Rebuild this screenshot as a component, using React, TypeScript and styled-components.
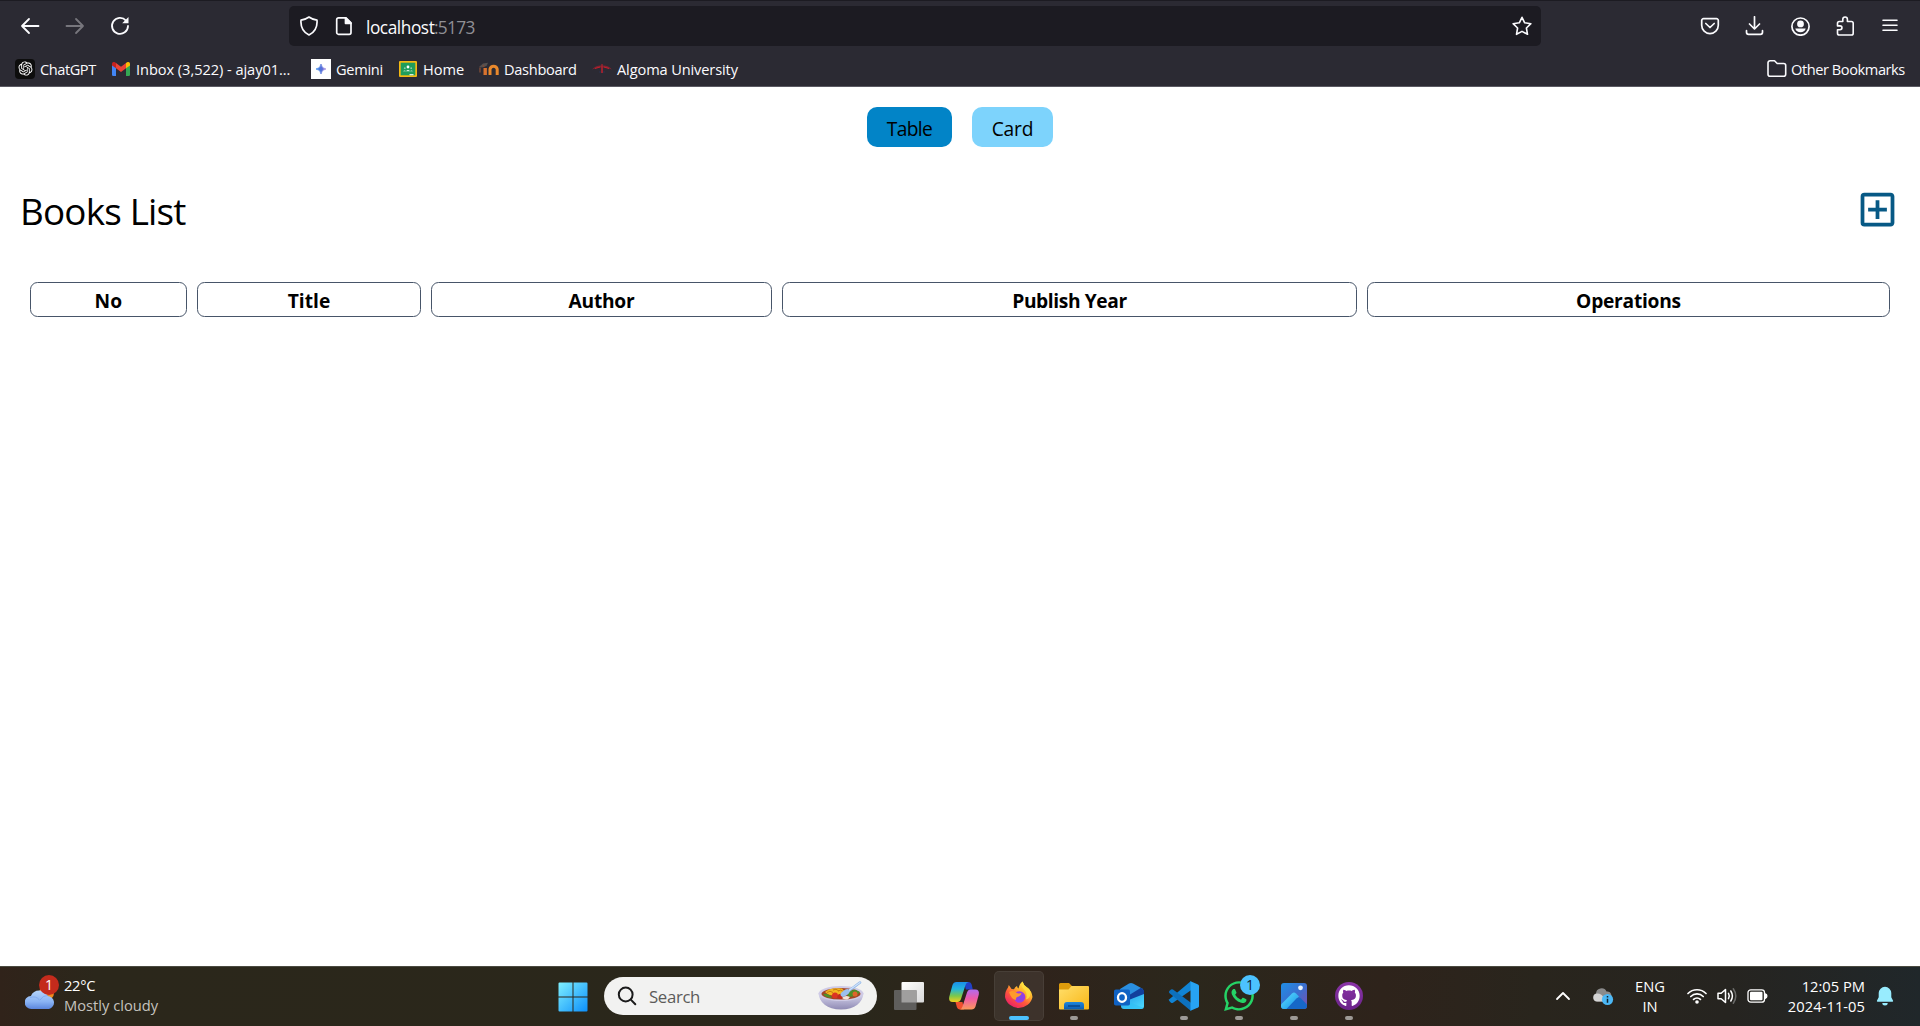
import React from 'react';
import styled, { createGlobalStyle, css } from 'styled-components';
import { RiOpenaiFill } from 'react-icons/ri';
import { FaWhatsapp, FaGithub } from 'react-icons/fa';
import { MdOutlineAddBox } from 'react-icons/md';

const font = `"Open Sans", "Noto Sans", sans-serif`;

const GlobalStyle = createGlobalStyle`
  *, *::before, *::after { box-sizing: border-box; }
  body { margin: 0; background: #fff; font-family: ${font}; }
  svg { display: block; flex: none; }
`;

const Screen = styled.div`
  display: flex;
  flex-direction: column;
  width: 1920px;
  height: 1026px;
  overflow: hidden;
`;

const Label = styled.span<{ $size: number; $w?: number; $ls?: number; $c?: string; $bold?: boolean; $dy?: number }>`
  flex: none;
  width: ${p => (p.$w ? `${p.$w}px` : 'auto')};
  font-size: ${p => p.$size}px;
  letter-spacing: ${p => p.$ls ?? 0}px;
  color: ${p => p.$c ?? 'inherit'};
  font-weight: ${p => (p.$bold ? 700 : 400)};
  padding-top: ${p => p.$dy ?? 0}px;
  line-height: 20px;
  white-space: nowrap;
`;

/* ---------- browser chrome ---------- */
const Chrome = styled.header`
  display: flex;
  flex-direction: column;
  height: 87px;
  background: #2b2a33;
  border-top: 1px solid #1c1b22;
  border-bottom: 1px solid #5a5962;
  color: #fbfbfe;
`;
const NavRow = styled.div`
  display: flex;
  align-items: center;
  height: 50px;
`;
const NavButtons = styled.div`
  display: flex;
  gap: 25px;
  padding-left: 20px;
  width: 289px;
`;
const AddressBar = styled.div`
  display: flex;
  align-items: center;
  width: 1252px;
  height: 40px;
  padding: 0 9px 0 10px;
  border-radius: 5px;
  background: #1c1b22;
`;
const DocSlot = styled.div`
  margin: 0 12px 0 15px;
`;
const Spacer = styled.div`
  flex: 1;
`;
const ToolButtons = styled.div`
  display: flex;
  align-items: center;
  gap: 25px;
  margin-left: 159px;
`;
const Bookmarks = styled.nav`
  display: flex;
  align-items: center;
  height: 35px;
  margin-top: 1px;
  padding: 0 14px 0 15px;
`;
const Bookmark = styled.div<{ $mr?: number; $gap?: number }>`
  display: flex;
  align-items: center;
  gap: ${p => p.$gap ?? 5}px;
  margin-right: ${p => p.$mr ?? 0}px;
`;
const Favicon = styled.div<{ $bg?: string; $r?: number; $w?: number; $c?: string }>`
  display: flex;
  align-items: center;
  justify-content: center;
  width: ${p => p.$w ?? 20}px;
  height: 20px;
  border-radius: ${p => p.$r ?? 0}px;
  background: ${p => p.$bg ?? 'transparent'};
  color: ${p => p.$c ?? '#fff'};
`;

const Line = styled.svg.attrs({ fill: 'none', stroke: 'currentColor', strokeLinecap: 'round', strokeLinejoin: 'round' })<{ $w?: number }>`
  stroke-width: ${p => p.$w ?? 1.7};
`;

/* ---------- page ---------- */
const Page = styled.main`
  display: flex;
  flex-direction: column;
  height: 879px;
  padding: 20px;
  color: #000;
`;
const Switch = styled.div`
  display: flex;
  justify-content: center;
  gap: 20px;
`;
const ViewButton = styled.button<{ $bg: string; $w: number }>`
  display: flex;
  align-items: center;
  justify-content: center;
  width: ${p => p.$w}px;
  height: 40px;
  padding: 4px 0 0;
  border: 0;
  border-radius: 10px;
  background: ${p => p.$bg};
  font-family: inherit;
  color: #000;
`;
const TitleRow = styled.div`
  display: flex;
  align-items: center;
  justify-content: space-between;
  height: 45px;
  margin-top: 40px;
  > svg { color: #075985; }
`;
const Heading = styled.h1`
  margin: 0;
  padding-top: 3px;
  font-size: 36.8px;
  line-height: 45px;
  font-weight: 400;
  letter-spacing: -0.8px;
`;
const Table = styled.div`
  display: grid;
  grid-template-columns: 157px 224px 341px 575px 523px;
  gap: 10px;
  margin: 50px 10px 0;
`;
const HeadCell = styled.div`
  display: flex;
  align-items: center;
  justify-content: center;
  height: 35px;
  padding-top: 2px;
  border: 1px solid #475569;
  border-radius: 7.5px;
`;

/* ---------- taskbar ---------- */
const Taskbar = styled.footer`
  display: flex;
  align-items: center;
  height: 60px;
  border-top: 1px solid #4a4a40;
  background: linear-gradient(90deg, #30231a 0%, #2b271b 5%, #2a271b 45%, #2f231b 54%, #2b271c 62%, #2e231b 72%, #29251d 80%, #262420 90%, #20272a 100%);
  color: #fff;
`;
const Weather = styled.div`
  display: flex;
  align-items: center;
  width: 547px;
  padding: 0 0 3px 25px;
  gap: 7px;
`;
const Stack = styled.div<{ $align?: string; $w?: number }>`
  display: flex;
  flex-direction: column;
  align-items: ${p => p.$align ?? 'flex-start'};
  width: ${p => (p.$w ? `${p.$w}px` : 'auto')};
`;
const AppRow = styled.div`
  display: flex;
  gap: 5px;
  padding-bottom: 1px;
`;
const AppTile = styled.div<{ $active?: boolean }>`
  display: flex;
  flex-direction: column;
  align-items: center;
  justify-content: space-between;
  width: 50px;
  height: 50px;
  padding: 9px 0 0;
  border-radius: 5px;
  ${p => p.$active && css`
    background: rgba(255, 255, 255, 0.07);
    box-shadow: inset 0 0 0 1px rgba(255, 255, 255, 0.06);
  `}
`;
const StartButton = styled.div`
  display: flex;
  justify-content: center;
  width: 51px;
`;
const Pill = styled.i<{ $state?: 'open' | 'active' }>`
  width: ${p => (p.$state === 'active' ? 20 : 8)}px;
  height: 4px;
  margin-bottom: 1px;
  border-radius: 2px;
  background: ${p => (p.$state === 'active' ? '#4cc2ff' : p.$state ? '#9d9a96' : 'transparent')};
`;
const SearchBox = styled.div`
  display: flex;
  align-items: center;
  gap: 12px;
  width: 273px;
  height: 38px;
  margin: 0 7px 1px 6px;
  padding: 0 13px;
  border-radius: 19px;
  background: #f2f2f1;
  color: #1b1b1b;
`;
const Glyph = styled.div`
  position: relative;
  display: flex;
  align-items: center;
  justify-content: center;
  width: 32px;
  height: 32px;
`;
const Badge = styled.span<{ $bg: string; $c: string; $top: number; $right: number }>`
  position: absolute;
  top: ${p => p.$top}px;
  right: ${p => p.$right}px;
  width: 20px;
  height: 20px;
  border-radius: 50%;
  background: ${p => p.$bg};
  color: ${p => p.$c};
  font-size: 14px;
  line-height: 20px;
  text-align: center;
`;
const Tray = styled.div`
  display: flex;
  align-items: center;
  flex: 1;
  padding: 0 0 1px 181px;
`;
const TrayItem = styled.div<{ $ml?: number }>`
  margin-left: ${p => p.$ml ?? 0}px;
`;

const Back = ({ flip }: { flip?: boolean }) => (
  <Line width="20" height="20" viewBox="0 0 20 20" color={flip ? '#77767d' : '#fbfbfe'} $w={1.8}>
    {flip ? <path d="M1.500 10H18M11 3l7 7-7 7" /> : <path d="M18.500 10H2M9 3l-7 7 7 7" />}
  </Line>
);
const Reload = () => (
  <Line width="20" height="20" viewBox="0 0 20 20" $w={1.8}>
    <path d="M16 4.600A8 8 0 1 0 18 10" />
    <path d="M18.500 1v6.300h-6.300z" fill="currentColor" stroke="none" />
  </Line>
);
const Shield = () => (
  <Line width="20" height="20" viewBox="0 0 20 20" $w={1.7}>
    <path d="M10 1c2.500 1.800 5 2.800 8 3.200 .5 6.300-2 11.800-8 14.800C4 16 1.500 10.500 2 4.200 5 3.800 7.500 2.800 10 1z" />
  </Line>
);
const Doc = () => (
  <Line width="20" height="20" viewBox="0 0 20 20" $w={1.7}>
    <path d="M4.500 1.800H12l5 5V16.500a1.800 1.800 0 0 1-1.800 1.800H4.500a1.800 1.800 0 0 1-1.800-1.800v-12.900A1.800 1.800 0 0 1 4.500 1.800z" />
    <path d="M11.500 1.800V7.300H17z" fill="currentColor" />
  </Line>
);
const Star = () => (
  <Line width="20" height="20" viewBox="0 0 20 20" $w={1.6}>
    <path d="M10 1.300l2.700 5.500 6.200.9-4.500 4.300 1.100 6.300L10 15.400l-5.500 2.900 1.100-6.300L1.100 7.700l6.200-.9z" />
  </Line>
);
const Pocket = () => (
  <Line width="20" height="20" viewBox="0 0 20 20" $w={1.7}>
    <path d="M3.500 2.700h13a1.800 1.800 0 0 1 1.800 1.800v4.800a8.300 8.300 0 0 1-16.600 0V4.500a1.800 1.800 0 0 1 1.800-1.800zM5.800 7.500l4.200 4 4.200-4" />
  </Line>
);
const Download = () => (
  <Line width="20" height="20" viewBox="0 0 20 20" $w={1.7}>
    <path d="M9.500 .8v12M4.500 8l5 5 5-5M1.500 14.700v1.600a2 2 0 0 0 2 2h12a2 2 0 0 0 2-2v-1.600" />
  </Line>
);
const Account = () => (
  <Line width="20" height="20" viewBox="0 0 20 20" $w={1.7}>
    <circle cx="10.500" cy="10.600" r="8.600" />
    <circle cx="10.500" cy="7.900" r="3.400" fill="currentColor" stroke="none" />
    <path d="M5.300 12.500h10.400c-.6 2.600-2.600 3.800-5.200 3.800s-4.600-1.200-5.200-3.800z" fill="currentColor" stroke="none" />
  </Line>
);
const Puzzle = () => (
  <Line width="20" height="20" viewBox="0 0 20 20" $w={1.6}>
    <path d="M7.800 5.500V3.300a2.300 2.300 0 0 1 4.600 0v2.200h4a1.800 1.800 0 0 1 1.800 1.800v9.900a1.800 1.800 0 0 1-1.800 1.800H4.300A1.800 1.800 0 0 1 2.500 17.200v-3.400h2.500a1.900 1.900 0 0 0 0-3.900H2.500V7.300a1.800 1.800 0 0 1 1.800-1.800z" />
  </Line>
);
const Menu = () => (
  <Line width="20" height="20" viewBox="0 0 20 20" $w={1.6}>
    <path d="M3 4.300h14M3 9.300h14M3 14.300h14" />
  </Line>
);
const Folder = () => (
  <Line width="20" height="20" viewBox="0 0 20 20" $w={1.6}>
    <path d="M3 1.800h4.500l2.700 2.700h6.500a2 2 0 0 1 2 2v8.700a2 2 0 0 1-2 2H3a2 2 0 0 1-2-2V3.800a2 2 0 0 1 2-2z" />
  </Line>
);
const Gmail = () => (
  <svg width="18" height="14" viewBox="0 0 18 14">
    <path d="M0 2.500L4 5v9H1.200A1.200 1.200 0 0 1 0 12.800z" fill="#4285f4" />
    <path d="M18 2.500L14 5v9h2.800a1.200 1.200 0 0 0 1.200-1.200z" fill="#34a853" />
    <path d="M14 1v5.300l4-2.800V2C18 0 16-.5 14.700.4z" fill="#fbbc04" />
    <path d="M4 1l5 3.800L14 1v5.300L9 10 4 6.300z" fill="#ea4335" />
    <path d="M4 1v5.300L0 3.500V2C0 0 2-.5 3.300.4z" fill="#c5221f" />
  </svg>
);
const GeminiMark = () => (
  <svg width="10" height="10" viewBox="0 0 10 10">
    <defs>
      <linearGradient id="gem" x1="0" x2="1"><stop stopColor="#2f86e8" /><stop offset=".6" stopColor="#5a6fd8" /><stop offset="1" stopColor="#b08be0" /></linearGradient>
    </defs>
    <path d="M5 0Q5.500 4.500 10 5 5.500 5.500 5 10 4.500 5.500 0 5 4.500 4.500 5 0z" fill="url(#gem)" stroke="url(#gem)" strokeWidth=".7" />
  </svg>
);
const Classroom = () => (
  <svg width="18" height="16" viewBox="0 0 18 16">
    <rect width="18" height="16" rx="1" fill="#f5b912" />
    <rect x="1.700" y="1.700" width="14.600" height="12.600" fill="#1f9d5b" />
    <circle cx="9" cy="6" r="1.400" fill="#fff" />
    <circle cx="5.800" cy="7.200" r=".9" fill="#8fd0ab" />
    <circle cx="12.200" cy="7.200" r=".9" fill="#8fd0ab" />
    <path d="M4 10.300q1.800-1.500 3 0 2-2.600 4 0 1.400-1.500 3 0z" fill="#e6f5ec" />
    <path d="M10.500 13h4v1.300h-4z" fill="#d8efe1" />
  </svg>
);
const Moodle = () => (
  <svg width="20" height="14" viewBox="0 0 20 14">
    <path d="M0 5l4-3.500 5-.8-1.500 3.200L3 5.500z" fill="#55504f" />
    <path d="M1 5.500v5M4 3l1 2" stroke="#7a4a38" strokeWidth="1.500" />
    <path d="M4.500 13V6h3.400V13z" fill="#d9722e" />
    <path d="M11 13V7.200a3.700 3.700 0 0 1 7.200 0V13" fill="none" stroke="#e8882c" strokeWidth="3" />
  </svg>
);
const Algoma = () => (
  <svg width="20" height="10" viewBox="0 0 20 10">
    <path d="M0 5.500Q4 .8 10 1.500 16 .8 20 5.500 15 3.500 10.800 3.500V9H9.200V3.500Q5 3.500 0 5.500z" fill="#8c2230" opacity=".85" />
    <path d="M3 4.500l5-1.500M17 4.500l-5-1.500M10 0v9" stroke="#c3202c" strokeWidth="1" />
    <path d="M8 7.500v1M12 7.500v1" stroke="#2a3868" strokeWidth="1.200" />
  </svg>
);

const WeatherIcon = () => (
  <svg width="32" height="32" viewBox="0 0 32 32">
    <defs>
      <linearGradient id="cl" x2="0" y2="1"><stop stopColor="#b5d4fa" /><stop offset=".6" stopColor="#8ab4f4" /><stop offset="1" stopColor="#5b86dd" /></linearGradient>
    </defs>
    <circle cx="21.500" cy="14" r="7.500" fill="#f08a1d" />
    <path d="M6.500 30a6.500 6.500 0 0 1-.6-13A9 9 0 0 1 22.500 17 6.600 6.600 0 0 1 24 30z" fill="url(#cl)" />
    <path d="M5 18.500q6-2 9.500 2.500M15 21q3-5 8-4.500" fill="none" stroke="#6f9be8" strokeWidth=".8" opacity=".7" />
  </svg>
);
const Start = () => (
  <svg width="30" height="30" viewBox="0 0 30 30">
    <defs>
      <linearGradient id="win" x2="1" y2="1"><stop stopColor="#7ff0ff" /><stop offset="1" stopColor="#0c8ffb" /></linearGradient>
    </defs>
    <path d="M1.500 .5H14.500V14.500H.5V1.500a1 1 0 0 1 1-1zM15.500 .5h13a1 1 0 0 1 1 1v13h-14zM.5 15.500h14v14h-13a1 1 0 0 1-1-1zM15.500 15.500h14v13a1 1 0 0 1-1 1h-13z" fill="url(#win)" />
  </svg>
);
const Magnifier = () => (
  <Line width="20" height="20" viewBox="0 0 20 20" $w={2}>
    <circle cx="8.700" cy="8.500" r="6.900" />
    <path d="M13.800 13.600l4.500 4.600" />
  </Line>
);
const Bowl = () => (
  <svg width="46" height="30" viewBox="0 0 46 30">
    <defs>
      <linearGradient id="bw" x2="0" y2="1"><stop stopColor="#dcdaf0" /><stop offset="1" stopColor="#8f8ab4" /></linearGradient>
    </defs>
    <path d="M.5 12C1 21 9 28.500 23 28.500S45 21 45.500 12z" fill="url(#bw)" />
    <ellipse cx="23" cy="12.500" rx="22.500" ry="7.500" fill="#cfcbe6" />
    <ellipse cx="23" cy="12.800" rx="19.500" ry="5.800" fill="#a34526" />
    <path d="M7 11q5-5 17-3.500l3 3.500-7 3q-8 2-13-3z" fill="#f2b61f" />
    <path d="M9 11.500q3-2.500 6 0M15 9q3-2 6 1M20 10q3-2 5 .5" stroke="#c97b10" fill="none" />
    <path d="M5 13q5-1.500 9 3.500-6 1-9-3.500zM29 11l8-2.500 5 2.500-4 4-8 1z" fill="#4f8f2a" />
    <circle cx="17" cy="14.500" r="3" fill="#dc3422" />
    <circle cx="22" cy="15.500" r="2.500" fill="#c42a1c" />
    <circle cx="37" cy="13" r="2.500" fill="#e0652b" />
    <path d="M24 17q3-3.500 8-1l-2 2.300q-4 .7-6-1.300z" fill="#f3e3d6" />
    <path d="M42 1.500L30 10.500" stroke="#8fb6e8" strokeWidth="2.600" strokeLinecap="round" />
    <path d="M42 1.500L30 10" stroke="#cfe2fa" strokeWidth="1.200" strokeLinecap="round" />
    <ellipse cx="27" cy="12" rx="5" ry="2.800" transform="rotate(-35 27 12)" fill="#9cc0ee" />
  </svg>
);
const TaskView = () => (
  <svg width="32" height="32" viewBox="0 0 32 32">
    <defs><linearGradient id="tv" x2="1" y2="1"><stop stopColor="#fff" /><stop offset="1" stopColor="#d9d9d9" /></linearGradient></defs>
    <rect x="8.500" y="2" width="22.500" height="20.500" rx="1" fill="url(#tv)" />
    <rect x="1" y="10" width="22.500" height="20" rx="1" fill="#5f5e5c" />
    <path d="M8.500 10h15v12.500h-15z" fill="#a09f9e" />
  </svg>
);
const Copilot = () => (
  <svg width="32" height="32" viewBox="0 0 32 32">
    <defs>
      <linearGradient id="c1" x2="0" y2="1"><stop stopColor="#1b8fe8" /><stop offset=".35" stopColor="#22b5dd" /><stop offset=".7" stopColor="#7cc84a" /><stop offset="1" stopColor="#f4cf1e" /></linearGradient>
      <linearGradient id="c2" x2="0" y2="1"><stop stopColor="#b16bf0" /><stop offset=".45" stopColor="#ee5aa8" /><stop offset="1" stopColor="#fb9a5a" /></linearGradient>
    </defs>
    <path d="M16 2h4.500q2.500 0 3.300 3l1 4.500h-7z" fill="#2141c8" />
    <path d="M16 29.500h-4q-2.500 0-3.300-3l-1.200-4.500h7z" fill="#f0502f" />
    <path d="M8.500 2H20.500q-2.300.3-3 3L13 19q-1 3-3.500 3H4.800Q.3 22 1.200 17L4.500 5q1-3 4-3z" fill="url(#c1)" />
    <path d="M23.500 29.500H11.500q2.300-.3 3-3L19 12.500q1-3 3.500-3h4.700Q31.700 9.500 30.800 14.500L27.500 26.500q-1 3-4 3z" fill="url(#c2)" />
  </svg>
);
const Firefox = () => (
  <svg width="30" height="32" viewBox="0 0 30 32">
    <defs>
      <linearGradient id="ff" x1=".85" y1=".05" x2=".2" y2="1"><stop stopColor="#fff04a" /><stop offset=".35" stopColor="#ffb02c" /><stop offset=".6" stopColor="#ff5a3a" /><stop offset="1" stopColor="#e8186c" /></linearGradient>
      <radialGradient id="fp"><stop stopColor="#7a4be8" /><stop offset="1" stopColor="#a13ae0" /></radialGradient>
    </defs>
    <path d="M18.500 1.500q1 3.500 4 5.500 5.500 4 6 10A14 13.500 0 0 1 1 17Q1 11 4 7.500L4.800 5l2.800 4 2.400.3q1-2.300 3-3.300.2 1.500 1.500 2.500Q15.500 3.500 18.500 1.500z" fill="url(#ff)" />
    <circle cx="15.500" cy="17" r="5.800" fill="url(#fp)" />
    <path d="M5 12q4-2 7 .5 2 1.500 5.500.5-.5 3-4.500 4-1.500 1-1 3-5-1-7-8z" fill="#ff9a2b" />
    <path d="M18.500 1.500q-2.500 4 1.500 8 4 4 2 10 4-1 4.500-6Q27 9 22.500 7q-3-2-4-5.500z" fill="#ffe03d" opacity=".85" />
  </svg>
);
const Explorer = () => (
  <svg width="32" height="32" viewBox="0 0 32 32">
    <defs>
      <linearGradient id="ex" x2="1" y2="1"><stop stopColor="#ffdf6b" /><stop offset="1" stopColor="#f9b616" /></linearGradient>
      <linearGradient id="eb" x2="0" y2="1"><stop stopColor="#1f86dc" /><stop offset="1" stopColor="#0c5cb0" /></linearGradient>
    </defs>
    <path d="M1 4.500A1.500 1.500 0 0 1 2.500 3H11l3 3v6H1z" fill="#dd9b0c" />
    <path d="M1 9.500h9.500l3-3.500H30a1 1 0 0 1 1 1v21.500a1 1 0 0 1-1 1H2a1 1 0 0 1-1-1z" fill="url(#ex)" />
    <path d="M6 29.500V25a3 3 0 0 1 3-3h14a3 3 0 0 1 3 3v4.500z" fill="url(#eb)" />
    <path d="M10 26h12" stroke="#073f80" strokeWidth="1.300" />
  </svg>
);
const Outlook = () => (
  <svg width="32" height="32" viewBox="0 0 32 32">
    <defs><linearGradient id="ol" x2="1" y2="1"><stop stopColor="#1f9be8" /><stop offset="1" stopColor="#4fdcff" /></linearGradient></defs>
    <path d="M7 9L16 3.500q2-1.100 4 0L30 9v3L17 20 7 14z" fill="#2a8fe0" />
    <path d="M13 17L28 7.800l3 2.500V16L16 24z" fill="#123f9c" />
    <path d="M31 14v12a3 3 0 0 1-3 3H11a3 3 0 0 1-3-3v-3z" fill="url(#ol)" />
    <path d="M16 22l15 6-3 1H11z" fill="#2fc0f5" opacity=".6" />
    <rect x="1" y="9.500" width="16" height="16" rx="1.800" fill="#0f62c4" />
    <ellipse cx="9" cy="17.500" rx="4" ry="4.300" fill="none" stroke="#fff" strokeWidth="2.300" />
  </svg>
);
const Code = () => (
  <svg width="32" height="32" viewBox="0 0 32 32">
    <path d="M3 22.700l-1.700-1.600q-.8-.9 0-1.800L23 1l1 8.500L5 22.700q-1 .6-2 0z" fill="#1184d4" />
    <path d="M3 9.500q1-.7 2 0L24 23.500 23 31 1.300 12.900q-.8-.9 0-1.800z" fill="#0d71be" />
    <path d="M22.500 30.800V1.200L30 4.500q1 .5 1 1.500v20q0 1-1 1.500z" fill="#27a3f2" />
  </svg>
);
const Photos = () => (
  <svg width="28" height="28" viewBox="0 0 28 28">
    <defs>
      <linearGradient id="ph" x1="0" x2="1" y2="1"><stop stopColor="#1f8fe6" /><stop offset=".5" stopColor="#3a6fd0" /><stop offset="1" stopColor="#7a4fb0" /></linearGradient>
      <linearGradient id="pm" x2="1" y2="1"><stop stopColor="#5fe0ff" /><stop offset="1" stopColor="#1590e8" /></linearGradient>
    </defs>
    <rect x="1" y="1" width="26" height="26" rx="3" fill="url(#ph)" />
    <path d="M1 22.500L12 11.500q2-2 4 0l3 3L7 27H4a3 3 0 0 1-3-3z" fill="url(#pm)" />
    <path d="M6.500 27L16.500 16.500q2.500-2 4.500 0l6 6V24a3 3 0 0 1-3 3z" fill="#1668c8" />
    <circle cx="20.500" cy="5.800" r="2.400" fill="#e9f4ff" />
  </svg>
);
const GithubDisc = styled.div`
  display: flex;
  align-items: center;
  justify-content: center;
  width: 28px;
  height: 28px;
  border-radius: 50%;
  background: linear-gradient(#8b34a8, #6a2389);
  color: #fff;
`;

const Chevron = () => (
  <Line width="16" height="16" viewBox="0 0 16 16" $w={1.8}><path d="M2 11l6-6 6 6" /></Line>
);
const CloudInfo = () => (
  <svg width="22" height="20" viewBox="0 0 22 20">
    <path d="M5 15.500a4 4 0 0 1-1-7.600A5.500 5.500 0 0 1 14.500 5.500 4.500 4.500 0 0 1 17 14l-2 1.500z" fill="#8b8b8b" />
    <path d="M5 15.500a4 4 0 0 1 .5-8q4 0 6 4v4z" fill="#d4d4d4" />
    <circle cx="15.500" cy="13.500" r="5.600" fill="#4cb8f5" />
    <path d="M15.500 12.800v4M15.500 10v1.400" stroke="#10222e" strokeWidth="1.500" />
  </svg>
);
const Wifi = () => (
  <Line width="20" height="18" viewBox="0 0 20 18" $w={1.7}>
    <path d="M1 6.500a12.700 12.700 0 0 1 18 0M3.800 9.500a8.800 8.800 0 0 1 12.400 0M6.600 12.400a4.800 4.800 0 0 1 6.800 0" />
    <circle cx="10" cy="15" r="1.800" fill="currentColor" stroke="none" />
  </Line>
);
const Volume = () => (
  <Line width="20" height="18" viewBox="0 0 20 18" $w={1.5}>
    <path d="M1 6.300h3.200L8.500 2.500v13L4.200 11.700H1zM11.500 6.300q1.600 2.700 0 5.400M13.800 4q3.200 5 0 10" />
    <path d="M16.300 1.800q5 7.200 0 14.400" stroke="#6a6a68" />
  </Line>
);
const Battery = () => (
  <Line width="21" height="16" viewBox="0 0 21 16" $w={1.3}>
    <rect x="1" y="1.800" width="16.500" height="12.400" rx="2.800" />
    <rect x="3" y="3.800" width="12.500" height="8.400" rx="1" fill="currentColor" stroke="none" />
    <path d="M18.300 5.900q1.600.5 1.600 2.200t-1.600 2.200z" fill="currentColor" />
  </Line>
);
const Bell = () => (
  <svg width="18" height="20" viewBox="0 0 18 20">
    <path d="M9 .8a6.300 6.300 0 0 1 6.300 6.300v4.200l1.800 3.500q.3 1-.8 1H1.700q-1.100 0-.8-1l1.800-3.500V7.100A6.300 6.300 0 0 1 9 .8z" fill="#98ecfe" />
    <path d="M6.300 17h5.400a2.700 2.500 0 0 1-5.400 0z" fill="#98ecfe" />
  </svg>
);

const bookmarks = [
  { text: 'ChatGPT', w: 57, ls: -0.45, mr: 15, gap: 5, icon: <Favicon $bg="#0d0d0d" $r={4}><RiOpenaiFill size={17} /></Favicon> },
  { text: 'Inbox (3,522) - ajay01...', w: 155, ls: -0.05, mr: 20, gap: 6, icon: <Favicon $w={18}><Gmail /></Favicon> },
  { text: 'Gemini', w: 48, ls: -0.3, mr: 15, gap: 5, icon: <Favicon $bg="#fff"><GeminiMark /></Favicon> },
  { text: 'Home', w: 42, ls: 0, mr: 14, gap: 6, icon: <Favicon $w={18}><Classroom /></Favicon> },
  { text: 'Dashboard', w: 74, ls: -0.3, mr: 14, gap: 5, icon: <Favicon><Moodle /></Favicon> },
  { text: 'Algoma University', w: 122, ls: -0.12, mr: 0, gap: 5, icon: <Favicon><Algoma /></Favicon> },
];

const columns: { text: string; ls: number }[] = [
  { text: 'No', ls: 0.3 },
  { text: 'Title', ls: 0 },
  { text: 'Author', ls: -0.25 },
  { text: 'Publish Year', ls: -0.4 },
  { text: 'Operations', ls: -0.25 },
];

const apps: { icon: React.ReactNode; state?: 'open' | 'active' }[] = [
  { icon: <TaskView /> },
  { icon: <Copilot /> },
  { icon: <Firefox />, state: 'active' },
  { icon: <Explorer />, state: 'open' },
  { icon: <Outlook /> },
  { icon: <Code />, state: 'open' },
  { icon: <><FaWhatsapp size={34} color="#25d366" /><Badge $bg="#4cc2ff" $c="#102030" $top={-5} $right={-5}>1</Badge></>, state: 'open' },
  { icon: <Photos />, state: 'open' },
  { icon: <GithubDisc><FaGithub size={22} /></GithubDisc>, state: 'open' },
];

export default function App() {
  return (
    <Screen>
      <GlobalStyle />
      <Chrome>
        <NavRow>
          <NavButtons><Back /><Back flip /><Reload /></NavButtons>
          <AddressBar>
            <Shield />
            <DocSlot><Doc /></DocSlot>
            <Label $size={17.3} $ls={-0.45} $w={68} $dy={4}>localhost</Label>
            <Label $size={17.3} $ls={-0.7} $c="#8f8f95" $dy={4}>:5173</Label>
            <Spacer />
            <Star />
          </AddressBar>
          <ToolButtons><Pocket /><Download /><Account /><Puzzle /><Menu /></ToolButtons>
        </NavRow>
        <Bookmarks>
          {bookmarks.map(b => (
            <Bookmark key={b.text} $mr={b.mr} $gap={b.gap}>{b.icon}<Label $size={14.6} $w={b.w} $ls={b.ls}>{b.text}</Label></Bookmark>
          ))}
          <Spacer />
          <Bookmark $gap={4}><Folder /><Label $size={14.6} $w={115} $ls={-0.43}>Other Bookmarks</Label></Bookmark>
        </Bookmarks>
      </Chrome>
      <Page>
        <Switch>
          <ViewButton $bg="#0284c7" $w={85}><Label $size={19.2} $ls={-0.65}>Table</Label></ViewButton>
          <ViewButton $bg="#7dd3fc" $w={81}><Label $size={19.2} $ls={-0.2}>Card</Label></ViewButton>
        </Switch>
        <TitleRow><Heading>Books List</Heading><MdOutlineAddBox size={45} /></TitleRow>
        <Table>{columns.map(c => <HeadCell key={c.text}><Label $size={19.2} $ls={c.ls} $bold>{c.text}</Label></HeadCell>)}</Table>
      </Page>
      <Taskbar>
        <Weather>
          <Glyph><WeatherIcon /><Badge $bg="#c42b1c" $c="#fff" $top={-4} $right={-2}>1</Badge></Glyph>
          <Stack><Label $size={14.7} $ls={-0.3}>22°C</Label><Label $size={14.7} $c="#c5c3bf">Mostly cloudy</Label></Stack>
        </Weather>
        <StartButton><Start /></StartButton>
        <SearchBox><Magnifier /><Label $size={16.8} $ls={-0.35} $c="#5c5b59" $dy={1}>Search</Label><Spacer /><Bowl /></SearchBox>
        <AppRow>{apps.map((a, i) => <AppTile key={i} $active={a.state === 'active'}><Glyph>{a.icon}</Glyph><Pill $state={a.state} /></AppTile>)}</AppRow>
        <Tray>
          <TrayItem><Chevron /></TrayItem>
          <TrayItem $ml={21}><CloudInfo /></TrayItem>
          <TrayItem $ml={16}><Stack $align="center" $w={40}><Label $size={14.7}>ENG</Label><Label $size={14.7}>IN</Label></Stack></TrayItem>
          <TrayItem $ml={17}><Wifi /></TrayItem>
          <TrayItem $ml={10}><Volume /></TrayItem>
          <TrayItem $ml={10}><Battery /></TrayItem>
          <TrayItem $ml={17}><Stack $align="flex-end" $w={80}><Label $size={14.7}>12:05 PM</Label><Label $size={14.7} $ls={0.05}>2024-11-05</Label></Stack></TrayItem>
          <TrayItem $ml={11}><Bell /></TrayItem>
        </Tray>
      </Taskbar>
    </Screen>
  );
}
